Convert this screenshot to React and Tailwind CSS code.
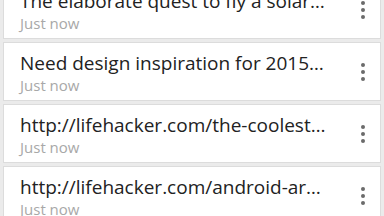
const ITEMS = [
  'The elaborate quest to fly a solar…',
  'Need design inspiration for 2015…',
  'http://lifehacker.com/the-coolest…',
  'http://lifehacker.com/android-ar…',
]

function Dots() {
  return (
    <div className="flex flex-col gap-[3px] items-center w-6">
      <span className="w-[4px] h-[4px] rounded-full bg-[#6b6b6b]" />
      <span className="w-[4px] h-[4px] rounded-full bg-[#6b6b6b]" />
      <span className="w-[4px] h-[4px] rounded-full bg-[#6b6b6b]" />
    </div>
  )
}

export default function App() {
  return (
    <div className="w-[384px] h-[216px] overflow-hidden bg-[#ebebeb]" style={{ fontFamily: '"Open Sans", sans-serif' }}>
      <div className="-mt-[20px] px-[3px] flex flex-col gap-[3px]">
        {ITEMS.map((t, i) => (
          <div
            key={i}
            className="h-[59px] bg-white border border-[#dcdcdc] flex items-center pl-[16px] pr-[5px]"
          >
            <div className="flex-1 min-w-0 flex flex-col self-start pt-[7px]">
              <span className="text-[19px] leading-[26px] text-[#222] whitespace-nowrap">{t}</span>
              <span className="text-[15px] leading-[18px] text-[#a8a8a8]">Just now</span>
            </div>
            <Dots />
          </div>
        ))}
      </div>
    </div>
  )
}
